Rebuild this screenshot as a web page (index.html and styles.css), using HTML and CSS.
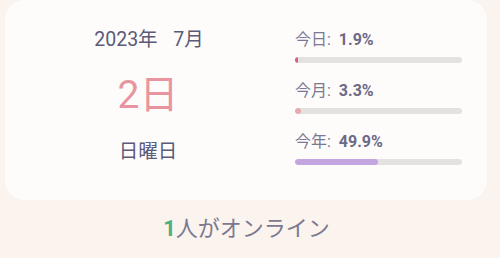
FILE: index.html
```html
<!DOCTYPE html>
<html lang="ja">
<head>
<meta charset="utf-8">
<link rel="stylesheet" href="styles.css">
</head>
<body>
<div class="page">
  <div class="card">
    <div class="date">
      <div class="ym">2023年&nbsp;&nbsp;7月</div>
      <div class="day">2日</div>
      <div class="wd">日曜日</div>
    </div>
    <div class="stats">
      <div class="stat">
        <div class="label">今日: <b>1.9%</b></div>
        <div class="bar"><div class="fill red" style="width:1.9%"></div></div>
      </div>
      <div class="stat">
        <div class="label">今月: <b>3.3%</b></div>
        <div class="bar"><div class="fill pink" style="width:3.3%"></div></div>
      </div>
      <div class="stat">
        <div class="label">今年: <b>49.9%</b></div>
        <div class="bar"><div class="fill purple" style="width:49.9%"></div></div>
      </div>
    </div>
  </div>
  <div class="online"><span class="num">1</span>人がオンライン</div>
</div>
</body>
</html>
```
FILE: styles.css
```css
html, body {
  margin: 0;
  padding: 0;
  background: #fbf3ee;
}
body {
  width: 500px;
  height: 258px;
  overflow: hidden;
  font-family: Roboto, "Noto Sans CJK JP", sans-serif;
}
.page {
  padding-left: 5px;
}
.card {
  width: 482px;
  height: 200px;
  box-sizing: border-box;
  background: #fefcfb;
  border-radius: 20px;
  display: flex;
  gap: 4px;
  padding-right: 25px;
}
.date {
  width: 286px;
  display: flex;
  flex-direction: column;
  align-items: center;
  padding-top: 28px;
  color: #5b5a78;
}
.ym {
  font-size: 19.5px;
  line-height: 24px;
  word-spacing: 3px;
  padding-left: 2px;
}
.day {
  margin-top: 18px;
  font-size: 39px;
  line-height: 50px;
  color: #e8959f;
}
.wd {
  margin-top: 20px;
  font-size: 19.5px;
  line-height: 24px;
}
.stats {
  width: 167px;
  padding-top: 30px;
  display: flex;
  flex-direction: column;
  gap: 18px;
}
.label {
  font-size: 16px;
  line-height: 20px;
  color: #7b7991;
}
.label b {
  color: #6c6a86;
  font-weight: 700;
  margin-left: 4px;
}
.bar {
  margin-top: 7px;
  height: 6px;
  border-radius: 3px;
  background: #e4e2e1;
  overflow: hidden;
}
.fill {
  height: 100%;
  border-radius: 3px;
}
.red { background: #d9607a; }
.pink { background: #e9a9ab; }
.purple { background: #c4a5e0; }
.online {
  margin-top: 15px;
  text-align: center;
  font-size: 22px;
  line-height: 28px;
  color: #7b7991;
  padding-right: 12px;
}
.num {
  color: #4fb07f;
  font-weight: 700;
}
```
